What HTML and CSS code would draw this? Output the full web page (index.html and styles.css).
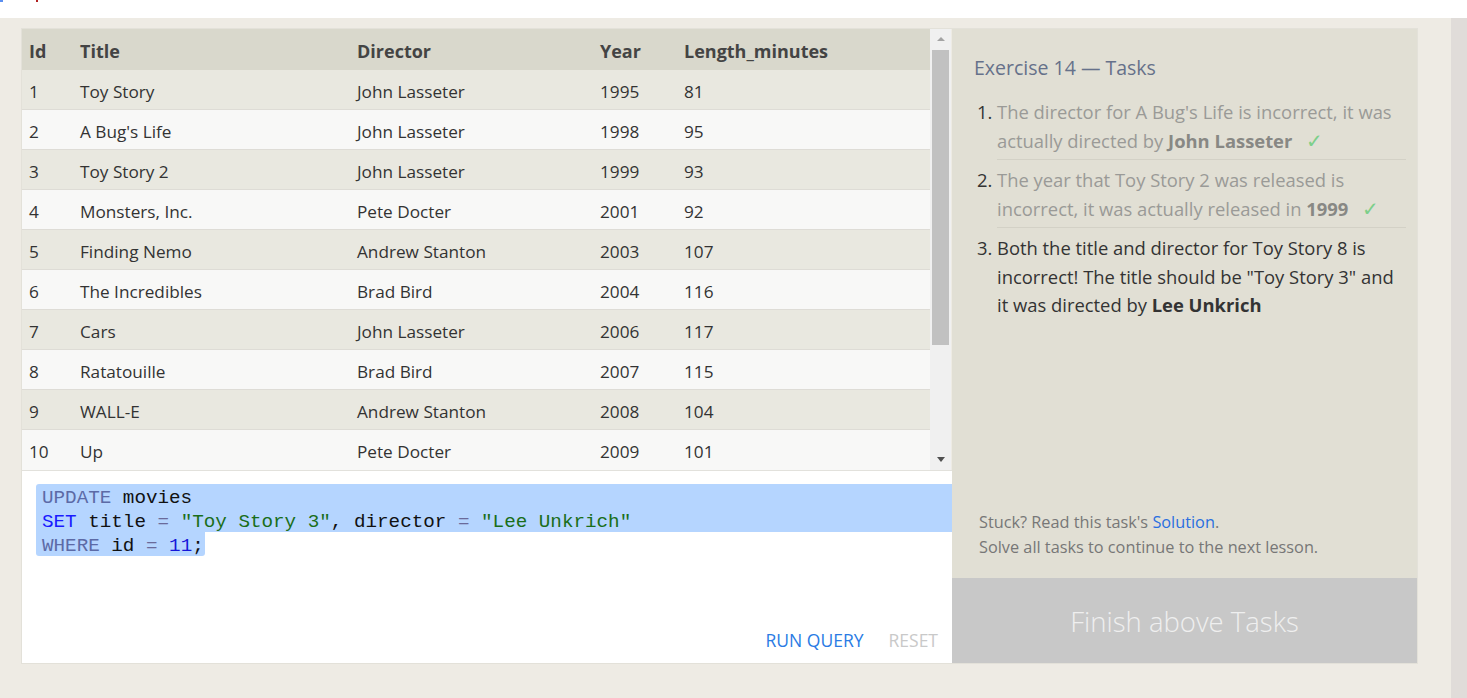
FILE: index.html
```html
<!DOCTYPE html>
<html>
<head>
<meta charset="utf-8">
<link rel="stylesheet" href="styles.css">
</head>
<body>
<div class="topbar"><span class="mark-blue"></span><span class="mark-red"></span></div>
<div class="page">
  <div class="content">
    <div class="exercise">
      <div class="left">
        <div class="table-area">
          <div class="table">
            <div class="row head"><div>Id</div><div>Title</div><div>Director</div><div>Year</div><div>Length_minutes</div></div>
            <div class="row odd"><div>1</div><div>Toy Story</div><div>John Lasseter</div><div>1995</div><div>81</div></div>
            <div class="row even"><div>2</div><div>A Bug's Life</div><div>John Lasseter</div><div>1998</div><div>95</div></div>
            <div class="row odd"><div>3</div><div>Toy Story 2</div><div>John Lasseter</div><div>1999</div><div>93</div></div>
            <div class="row even"><div>4</div><div>Monsters, Inc.</div><div>Pete Docter</div><div>2001</div><div>92</div></div>
            <div class="row odd"><div>5</div><div>Finding Nemo</div><div>Andrew Stanton</div><div>2003</div><div>107</div></div>
            <div class="row even"><div>6</div><div>The Incredibles</div><div>Brad Bird</div><div>2004</div><div>116</div></div>
            <div class="row odd"><div>7</div><div>Cars</div><div>John Lasseter</div><div>2006</div><div>117</div></div>
            <div class="row even"><div>8</div><div>Ratatouille</div><div>Brad Bird</div><div>2007</div><div>115</div></div>
            <div class="row odd"><div>9</div><div>WALL-E</div><div>Andrew Stanton</div><div>2008</div><div>104</div></div>
            <div class="row even last"><div>10</div><div>Up</div><div>Pete Docter</div><div>2009</div><div>101</div></div>
          </div>
          <div class="scrollbar">
            <div class="arrow up"></div>
            <div class="track"><div class="thumb"></div></div>
            <div class="arrow down"></div>
          </div>
        </div>
        <div class="editor">
          <div class="code">
            <div class="line sel"><span class="kw">UPDATE</span> movies</div>
            <div class="line sel"><span class="kw2">SET</span> title <span class="op">=</span> <span class="str">"Toy Story 3"</span>, director <span class="op">=</span> <span class="str">"Lee Unkrich"</span></div>
            <div class="line"><span class="sel last-sel"><span class="kw">WHERE</span> id <span class="op">=</span> <span class="num">11</span>;</span></div>
          </div>
          <div class="buttons">
            <span class="btn run">RUN QUERY</span>
            <span class="btn reset">RESET</span>
          </div>
        </div>
      </div>
      <div class="tasks">
        <h2 class="tasks-title">Exercise 14 — Tasks</h2>
        <ol class="task-list">
          <li class="done">The director for A Bug's Life is incorrect, it was actually directed by <b>John Lasseter</b><span class="check">✓</span></li>
          <li class="done">The year that Toy Story 2 was released is incorrect, it was actually released in <b>1999</b><span class="check">✓</span></li>
          <li class="current">Both the title and director for Toy Story 8 is incorrect! The title should be "Toy Story 3" and it was directed by <b>Lee Unkrich</b></li>
        </ol>
        <div class="spacer"></div>
        <div class="stuck">
          <div>Stuck? Read this task's <a class="solution">Solution</a>.</div>
          <div>Solve all tasks to continue to the next lesson.</div>
        </div>
        <div class="finish">Finish above Tasks</div>
      </div>
    </div>
  </div>
  <div class="outer-scroll"></div>
</div>
</body>
</html>
```

FILE: styles.css
```css
* { box-sizing: border-box; }
html, body { margin: 0; padding: 0; }
body {
  font-family: "Open Sans", "Noto Sans", sans-serif;
  color: #333;
  background: #fff;
  width: 1467px;
  height: 698px;
  overflow: hidden;
}
.topbar {
  height: 18px;
  background: #fff;
  display: flex;
  align-items: flex-start;
}
.mark-blue { width: 3px; height: 2px; background: #5b8ff0; }
.mark-red { width: 2px; height: 2px; background: #b02020; margin-left: 33px; }

.page {
  display: flex;
  height: 680px;
  background: #eeebe4;
}
.content {
  flex: 1;
  padding: 11px 0 0 22px;
}
.outer-scroll {
  width: 16px;
  background: #e0dcd9;
}
.exercise {
  display: flex;
  width: 1395px;
  height: 634px;
  box-shadow: 0 0 0 1px #e3e1d9;
}
.left {
  width: 930px;
  display: flex;
  flex-direction: column;
}
.table-area {
  display: flex;
  height: 442px;
  border-bottom: 1px solid #e2e1dc;
}
.table {
  width: 908px;
}
.row {
  display: grid;
  grid-template-columns: 51px 277px 243px 84px 1fr;
  height: 40px;
  align-items: center;
  font-size: 17.2px;
  border-bottom: 1px solid #dedcd6;
  color: #333;
}
.row > div { padding: 3px 0 0 7px; white-space: nowrap; }
.row.head {
  height: 41px;
  background: #d9d8cc;
  font-weight: 700;
  color: #444;
  border-bottom: none;
  font-size: 18px;
}
.row.odd { background: #e9e8e0; }
.row.even { background: #f8f8f7; }
.row.last { border-bottom: none; }

.scrollbar {
  width: 21px;
  background: #f0f0f0;
  display: flex;
  flex-direction: column;
  align-items: center;
}
.arrow { width: 0; height: 0; border-left: 4px solid transparent; border-right: 4px solid transparent; }
.arrow.up { border-bottom: 4px solid #a3a3a3; margin: 8px 0 9px; }
.arrow.down { border-top: 5px solid #505050; margin: 7px 0 8px; }
.track { flex: 1; width: 100%; padding: 0 2px; }
.thumb { height: 295px; background: #c1c1c1; }

.editor {
  flex: 1;
  background: #fff;
  display: flex;
  flex-direction: column;
  justify-content: space-between;
  padding: 13px 0 11px 14px;
}
.code {
  font-family: "Liberation Mono", "DejaVu Sans Mono", monospace;
  font-size: 19.25px;
  line-height: 24px;
  color: #111;
}
.line { padding: 2px 0 0 6px; height: 24px; white-space: pre; }
.line.sel { background: #b5d5ff; }
.line.sel:first-child { border-top-left-radius: 3px; }
.line .last-sel {
  display: inline-block;
  background: #b5d5ff;
  margin: -2px 0 0 -6px;
  padding: 2px 1px 0 6px;
  height: 24px;
  line-height: 24px;
  vertical-align: top;
  border-radius: 0 0 3px 3px;
}
.kw { color: #5c6aa6; }
.kw2 { color: #1a1aff; }
.op { color: #6a6a9a; }
.str { color: #1a6e1a; }
.num { color: #1515d9; }

.buttons {
  display: flex;
  justify-content: flex-end;
  gap: 25px;
  padding-right: 14px;
  font-size: 17.5px;
}
.btn { cursor: pointer; }
.btn.run { color: #2a7be4; }
.btn.reset { color: #c9c9c9; }

.tasks {
  width: 465px;
  background: #e1dfd4;
  display: flex;
  flex-direction: column;
}
.tasks-title {
  margin: 27px 0 0 22px;
  font-size: 19.5px;
  font-weight: 400;
  line-height: 24px;
  color: #66718a;
}
.task-list {
  margin: 18px 11px 0 45px;
  padding: 0;
  font-size: 18.4px;
  line-height: 28.5px;
}
.task-list li { padding: 0 0 4px 0; }
.task-list li + li { padding-top: 6px; }
.task-list li.done { border-bottom: 1px solid #d3d1c6; color: #9a9a97; }
.task-list li.done b { color: #888884; }
.task-list li::marker { color: #333; }
.task-list li.current { color: #333; }
.check { color: #7dcf8a; margin-left: 14px; font-size: 20px; }
.spacer { flex: 1; }
.stuck {
  padding: 0 0 18px 27px;
  font-size: 16.3px;
  line-height: 25px;
  color: #777;
}
.solution { color: #2a6fe0; text-decoration: none; }
.finish {
  height: 85px;
  background: #c8c8c8;
  color: #efefef;
  font-size: 27.5px;
  font-weight: 300;
  display: flex;
  align-items: center;
  justify-content: center;
  padding-top: 2px;
}
```
